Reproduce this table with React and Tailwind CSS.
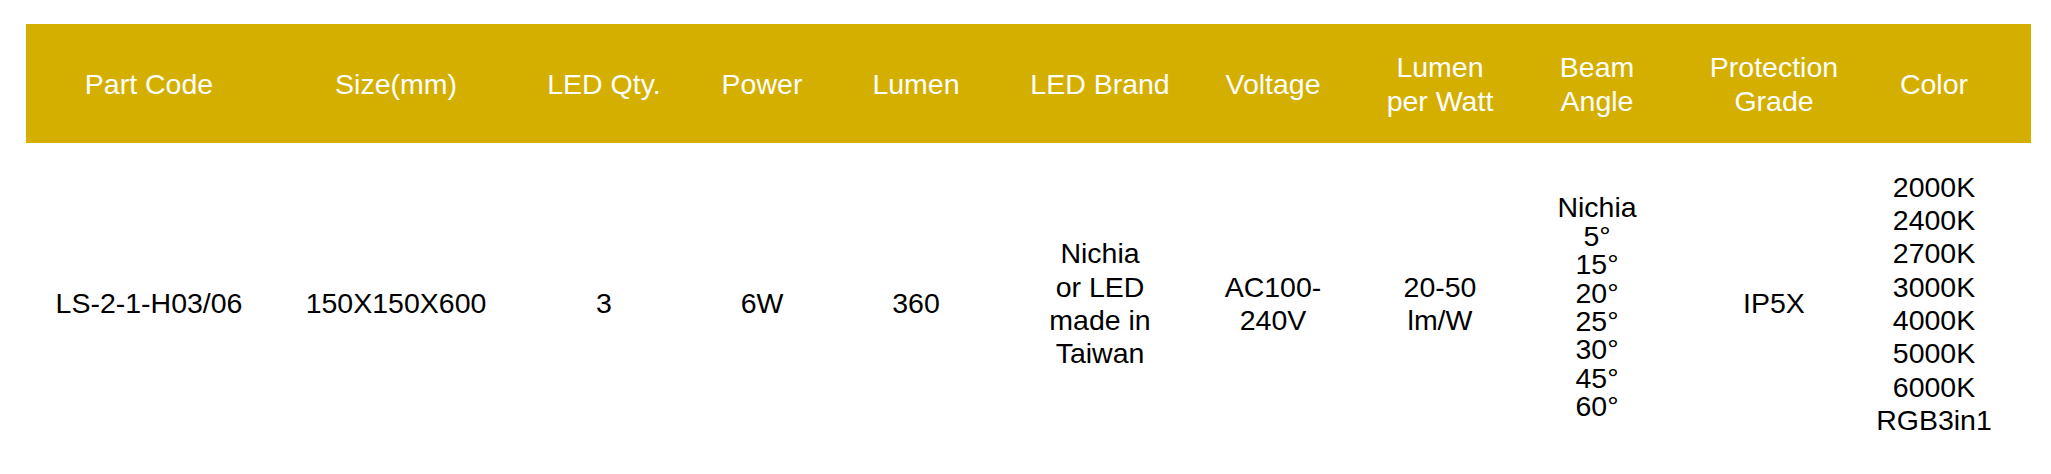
import React from "react";

// column widths + small padding nudges so the text centres sit where the sheet has them
const COLS = [
  "",
  "pl-[20px]",
  "pl-[24px]",
  "",
  "pr-[16px]",
  "pl-[4px]",
  "",
  "pl-[3px]",
  "pr-[11px]",
  "pl-[8px]",
  "pr-[17px]",
];

const HEAD = [
  ["Part Code"],
  ["Size(mm)"],
  ["LED Qty."],
  ["Power"],
  ["Lumen"],
  ["LED Brand"],
  ["Voltage"],
  ["Lumen", "per Watt"],
  ["Beam", "Angle"],
  ["Protection", "Grade"],
  ["Color"],
];

const BODY = [
  ["LS-2-1-H03/06"],
  ["150X150X600"],
  ["3"],
  ["6W"],
  ["360"],
  ["Nichia", "or LED", "made in", "Taiwan"],
  ["AC100-", "240V"],
  ["20-50", "lm/W"],
  ["Nichia", "5°", "15°", "20°", "25°", "30°", "45°", "60°"],
  ["IP5X"],
  ["2000K", "2400K", "2700K", "3000K", "4000K", "5000K", "6000K", "RGB3in1"],
];

const GRID =
  "grid grid-cols-[246px_228px_184px_156px_168px_180px_170px_161px_167px_168px_177px]";

export default function App() {
  return (
    <div className="w-[2051px] h-[474px] bg-white pt-[24px] pl-[26px] font-['Liberation_Sans',Arial,sans-serif] text-[28.5px]">
      <div className="w-[2005px]">
        {/* header row */}
        <div className={`${GRID} h-[119px] bg-[#d4af00] text-white leading-[34px]`}>
          {HEAD.map((lines, i) => (
            <div key={i} className={`flex flex-col items-center justify-center text-center whitespace-nowrap ${COLS[i]}`}>
              {lines.map((l) => (
                <span key={l}>{l}</span>
              ))}
            </div>
          ))}
        </div>

        {/* data row */}
        <div className={`${GRID} h-[322px] text-black`}>
          {BODY.map((lines, i) => (
            <div
              key={i}
              className={`flex flex-col items-center justify-center text-center whitespace-nowrap ${COLS[i]} ${
                i === 8 ? "leading-[28.4px] pt-[6px]" : "leading-[33.3px]"
              }`}
            >
              {lines.map((l) => (
                <span key={l}>{l}</span>
              ))}
            </div>
          ))}
        </div>
      </div>
    </div>
  );
}
